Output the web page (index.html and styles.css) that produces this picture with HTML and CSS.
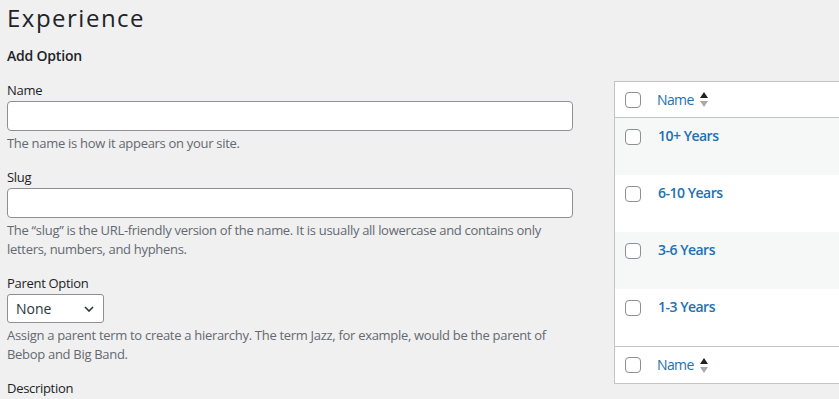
FILE: index.html
```html
<!DOCTYPE html>
<html lang="en">
<head>
<meta charset="utf-8">
<title>Experience</title>
<link rel="stylesheet" href="styles.css">
</head>
<body>
<div class="wrap">
  <h1 class="page-title">Experience</h1>
  <div class="cols">
    <div class="col-left">
      <h2 class="form-title">Add Option</h2>
      <div class="field">
        <label class="field-label" for="tag-name">Name</label>
        <input class="text-input" id="tag-name" type="text">
        <p class="description">The name is how it appears on your site.</p>
      </div>
      <div class="field">
        <label class="field-label" for="tag-slug">Slug</label>
        <input class="text-input" id="tag-slug" type="text">
        <p class="description">The “slug” is the URL-friendly version of the name. It is usually all lowercase and contains only letters, numbers, and hyphens.</p>
      </div>
      <div class="field">
        <span class="field-label">Parent Option</span>
        <div class="select-box">
          <span>None</span>
          <svg class="chevron" width="10" height="6" viewBox="0 0 10 6"><path d="M1 1l4 4 4-4" fill="none" stroke="#2c3338" stroke-width="1.6"/></svg>
        </div>
        <p class="description">Assign a parent term to create a hierarchy. The term Jazz, for example, would be the parent of Bebop and Big Band.</p>
      </div>
      <div class="field">
        <span class="field-label">Description</span>
      </div>
    </div>
    <div class="col-right">
      <div class="terms">
        <div class="terms-head">
          <span class="cb"></span>
          <span class="col-name">Name</span>
          <svg class="sort" width="8" height="15" viewBox="0 0 8 15"><path d="M4 0L8 6H0z" fill="#1d2327"/><path d="M0 9h8L4 15z" fill="#a7aaad"/></svg>
        </div>
        <div class="term-row alt">
          <span class="cb"></span>
          <span class="row-title">10+ Years</span>
        </div>
        <div class="term-row">
          <span class="cb"></span>
          <span class="row-title">6-10 Years</span>
        </div>
        <div class="term-row alt">
          <span class="cb"></span>
          <span class="row-title">3-6 Years</span>
        </div>
        <div class="term-row">
          <span class="cb"></span>
          <span class="row-title">1-3 Years</span>
        </div>
        <div class="terms-foot">
          <span class="cb"></span>
          <span class="col-name">Name</span>
          <svg class="sort" width="8" height="15" viewBox="0 0 8 15"><path d="M4 0L8 6H0z" fill="#1d2327"/><path d="M0 9h8L4 15z" fill="#a7aaad"/></svg>
        </div>
      </div>
    </div>
  </div>
</div>
</body>
</html>
```

FILE: styles.css
```css
html, body {
  margin: 0;
  padding: 0;
  overflow: hidden;
  background: #f0f0f1;
}

body {
  width: 839px;
  height: 399px;
  font-family: "Open Sans", "Noto Sans", sans-serif;
  font-size: 13px;
  letter-spacing: -0.3px;
  color: #1d2327;
}

.wrap {
  padding-left: 7px;
}

.page-title {
  margin: 0;
  padding-top: 3px;
  font-size: 24px;
  font-weight: 400;
  line-height: 30px;
  letter-spacing: 1.5px;
  color: #1d2327;
}

.cols {
  display: flex;
  gap: 41px;
}

.col-left {
  flex: none;
  width: 566px;
}

.col-right {
  flex: none;
  width: 500px;
  padding-top: 48px;
}

.form-title {
  margin: 13px 0 15px;
  font-size: 14px;
  font-weight: 600;
  line-height: 20px;
  letter-spacing: -0.2px;
}

.field {
  margin-bottom: 15px;
}

.field-label {
  display: block;
  line-height: 18px;
  margin-bottom: 2px;
}

.text-input {
  display: block;
  box-sizing: border-box;
  width: 100%;
  height: 30px;
  margin: 0;
  border: 1px solid #8c8f94;
  border-radius: 4px;
  background: #fff;
}

.description {
  margin: 3px 0 0;
  color: #646970;
  line-height: 19px;
}

.select-box {
  box-sizing: border-box;
  display: flex;
  align-items: center;
  justify-content: space-between;
  width: 97px;
  height: 29px;
  padding: 0 9px 0 8px;
  border: 1px solid #8c8f94;
  border-radius: 3px;
  background: #fff;
  font-size: 14px;
  letter-spacing: 0;
  color: #2c3338;
}

.terms {
  border: 1px solid #c3c4c7;
  background: #fff;
}

.terms-head,
.terms-foot {
  display: flex;
  align-items: center;
  height: 35px;
  padding-left: 10px;
  color: #2271b1;
  font-size: 14px;
}

.terms-head {
  border-bottom: 1px solid #c3c4c7;
}

.terms-foot {
  height: 36px;
  border-top: 1px solid #c3c4c7;
}

.cb {
  flex: none;
  box-sizing: border-box;
  width: 16px;
  height: 16px;
  border: 1px solid #8c8f94;
  border-radius: 4px;
  background: #fff;
}

.col-name {
  margin-left: 16px;
  line-height: 20px;
  letter-spacing: -0.6px;
}

.sort {
  margin-left: 6px;
}

.term-row {
  display: flex;
  align-items: flex-start;
  box-sizing: border-box;
  height: 57px;
  padding: 8px 0 0 10px;
  background: #fff;
}

.term-row.alt {
  background: #f6f7f7;
}

.term-row .cb {
  margin-top: 3px;
}

.row-title {
  margin-left: 17px;
  font-size: 14px;
  font-weight: 600;
  line-height: 20px;
  letter-spacing: -0.5px;
  color: #2271b1;
}
```
